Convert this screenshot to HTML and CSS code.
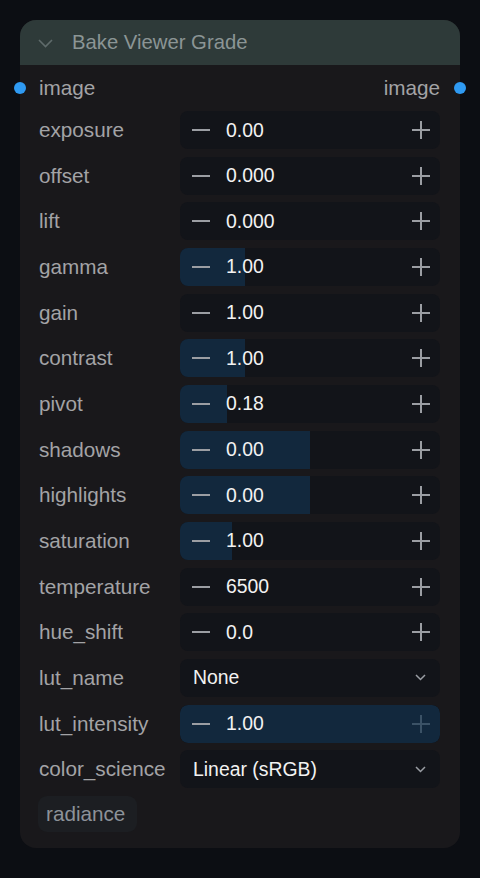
FILE: index.html
```html
<!DOCTYPE html>
<html>
<head>
<title>Bake Viewer Grade</title>
<link rel="stylesheet" href="styles.css">
</head>
<body>
<div class="node">
  <div class="node-head">
    <svg class="collapse" width="15" height="9" viewBox="0 0 15 9"><path d="M1 1l6.5 6.5L14 1" fill="none" stroke="#5f6b6b" stroke-width="1.6"/></svg>
    <span class="node-title">Bake Viewer Grade</span>
  </div>
  <div class="slots">
    <span class="dot dot-in"></span>
    <span class="slot-label">image</span>
    <span class="slot-label slot-out">image</span>
    <span class="dot dot-out"></span>
  </div>
  <div class="widgets">
    <div class="row"><span class="label">exposure</span><div class="num"><span class="minus"></span><span class="val">0.00</span><span class="plus"></span></div></div>
    <div class="row"><span class="label">offset</span><div class="num"><span class="minus"></span><span class="val">0.000</span><span class="plus"></span></div></div>
    <div class="row"><span class="label">lift</span><div class="num"><span class="minus"></span><span class="val">0.000</span><span class="plus"></span></div></div>
    <div class="row"><span class="label">gamma</span><div class="num"><span class="fill" style="width:25%"></span><span class="minus"></span><span class="val">1.00</span><span class="plus"></span></div></div>
    <div class="row"><span class="label">gain</span><div class="num"><span class="minus"></span><span class="val">1.00</span><span class="plus"></span></div></div>
    <div class="row"><span class="label">contrast</span><div class="num"><span class="fill" style="width:25%"></span><span class="minus"></span><span class="val">1.00</span><span class="plus"></span></div></div>
    <div class="row"><span class="label">pivot</span><div class="num"><span class="fill" style="width:18%"></span><span class="minus"></span><span class="val">0.18</span><span class="plus"></span></div></div>
    <div class="row"><span class="label">shadows</span><div class="num"><span class="fill" style="width:50%"></span><span class="minus"></span><span class="val">0.00</span><span class="plus"></span></div></div>
    <div class="row"><span class="label">highlights</span><div class="num"><span class="fill" style="width:50%"></span><span class="minus"></span><span class="val">0.00</span><span class="plus"></span></div></div>
    <div class="row"><span class="label">saturation</span><div class="num"><span class="fill" style="width:20%"></span><span class="minus"></span><span class="val">1.00</span><span class="plus"></span></div></div>
    <div class="row"><span class="label">temperature</span><div class="num"><span class="minus"></span><span class="val">6500</span><span class="plus"></span></div></div>
    <div class="row"><span class="label">hue_shift</span><div class="num"><span class="minus"></span><span class="val">0.0</span><span class="plus"></span></div></div>
    <div class="row"><span class="label">lut_name</span><div class="combo"><span class="val">None</span><svg class="caret" width="11" height="7" viewBox="0 0 11 7"><path d="M1 1l4.5 4.5L10 1" fill="none" stroke="#9a9ea4" stroke-width="1.5"/></svg></div></div>
    <div class="row"><span class="label">lut_intensity</span><div class="num full"><span class="fill" style="width:100%"></span><span class="minus"></span><span class="val">1.00</span><span class="plus dim"></span></div></div>
    <div class="row"><span class="label">color_science</span><div class="combo"><span class="val">Linear (sRGB)</span><svg class="caret" width="11" height="7" viewBox="0 0 11 7"><path d="M1 1l4.5 4.5L10 1" fill="none" stroke="#9a9ea4" stroke-width="1.5"/></svg></div></div>
  </div>
  <div class="tags"><span class="tag">radiance</span></div>
</div>
</body>
</html>
```

FILE: styles.css
```css
body{
  margin:0;
  background:#0c0e13;
  font-family:"Liberation Sans",Arial,sans-serif;
  font-size:20.7px;
}
.node{
  margin:20px;
  width:440px;
  height:828px;
  box-sizing:border-box;
  background:#19181b;
  border-radius:16px;
  position:relative;
}
.node-head{
  height:45px;
  background:#2e3a39;
  border-radius:16px 16px 0 0;
  display:flex;
  align-items:center;
  padding-left:18px;
}
.collapse{margin-top:1px;}
.node-title{
  color:#8b9595;
  margin-left:19px;
  font-size:20.3px;
}
.slots{
  height:46px;
  display:flex;
  align-items:center;
  padding:0 20px 0 19px;
  position:relative;
}
.slot-label{color:#a3a3a6;}
.slot-out{margin-left:auto;}
.dot{
  position:absolute;
  width:12px;height:12px;
  border-radius:50%;
  background:#2f9af2;
  top:17px;
}
.dot-in{left:-6px;}
.dot-out{right:-6px;}
.widgets{
  display:flex;
  flex-direction:column;
  gap:7.67px;
  padding:0 20px 0 19px;
}
.row{
  display:grid;
  grid-template-columns:141px 260px;
  height:38px;
  align-items:center;
}
.label{color:#a3a3a6;}
.num,.combo{
  position:relative;
  height:38px;
  background:#121419;
  border-radius:8px;
  display:flex;
  align-items:center;
  overflow:hidden;
}
.fill{
  position:absolute;
  left:0;top:0;bottom:0;
  background:#12283d;
}
.num.full .fill{border-radius:8px;}
.val{
  position:relative;
  color:#f2f2f2;
  font-size:19.4px;
}
.num .val{margin-left:16px;}
.combo .val{margin-left:13px;}
.minus,.plus{
  position:relative;
  width:18px;height:18px;
}
.minus{margin-left:12px;}
.plus{margin-left:auto;margin-right:10px;}
.minus::before,.plus::before,.plus::after{
  content:"";
  position:absolute;
  background:#9b9ea3;
}
.minus::before,.plus::before{left:0;right:0;top:8px;height:2px;}
.plus::after{top:0;bottom:0;left:8px;width:2px;}
.plus.dim::before,.plus.dim::after{background:#3b5266;}
.caret{margin-left:auto;margin-right:14px;}
.tags{padding:8px 0 0 18px;}
.tag{
  display:inline-block;
  height:36px;
  line-height:36px;
  padding:0 12px 0 8px;
  background:#1c1e22;
  border-radius:9px;
  color:#8d9299;
}
```
